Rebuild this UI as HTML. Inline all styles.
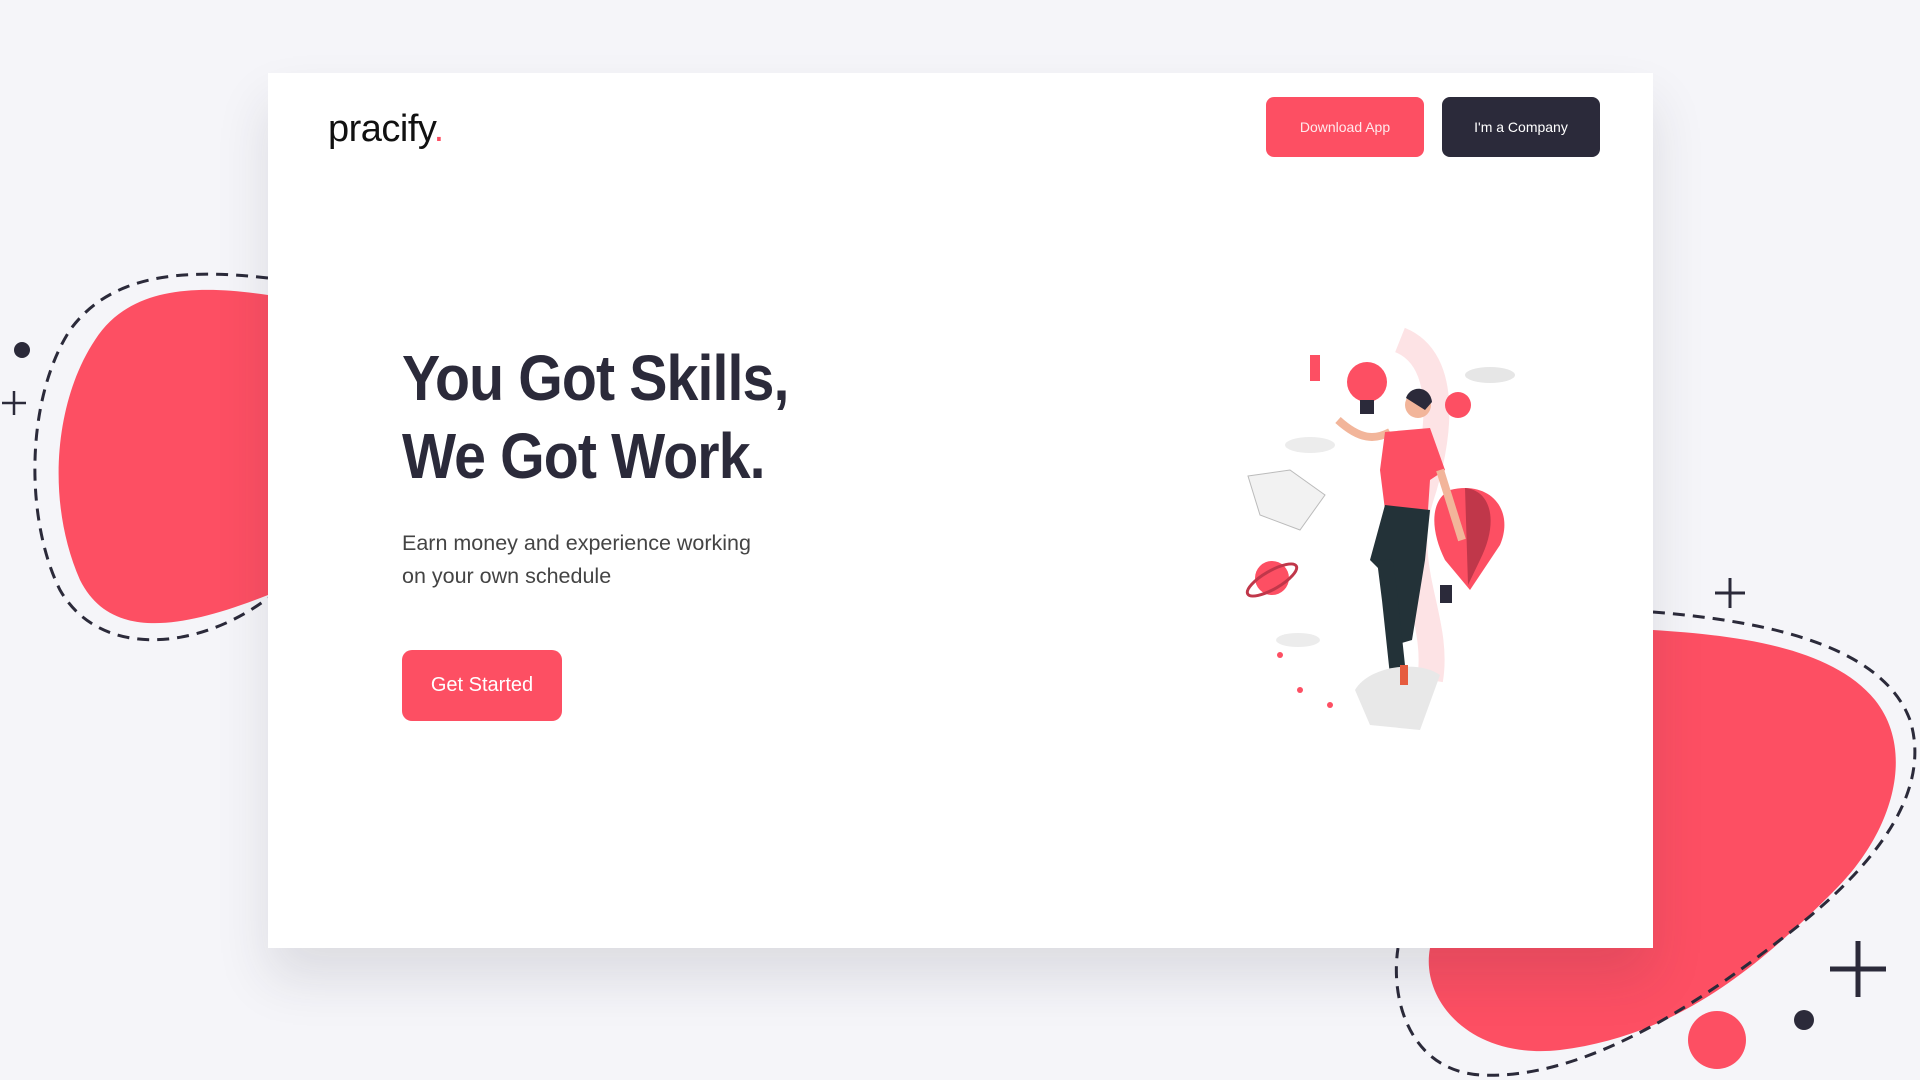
<!DOCTYPE html>
<html><head><meta charset="utf-8"><style>
*{margin:0;padding:0;box-sizing:border-box}
body{width:1920px;height:1080px;background:#f5f5f9;position:relative;overflow:hidden;font-family:"Liberation Sans",sans-serif}
svg.bg{position:absolute;left:0;top:0}
.card{position:absolute;left:268px;top:73px;width:1385px;height:875px;background:#fff;box-shadow:0 30px 50px rgba(40,40,60,.12)}
.logo{position:absolute;left:60px;top:35px;font-size:38px;color:#111;letter-spacing:-0.5px}
.logo span{color:#fd4f63}
.btn{position:absolute;top:24px;height:60px;width:158px;border-radius:8px;color:#fff;font-size:14px;display:flex;align-items:center;justify-content:center}
.b1{left:998px;background:#fd4f63;color:#ffe9ec}
.b2{left:1174px;background:#2b2a3a}
h1{position:absolute;left:134px;top:266px;font-size:64px;line-height:78px;color:#2b2a3a;font-weight:bold;letter-spacing:-1px;transform:scaleX(0.895);transform-origin:left top;white-space:nowrap}
p{position:absolute;left:134px;top:454px;font-size:21.5px;line-height:33px;color:#444}
.gs{position:absolute;left:134px;top:577px;width:160px;height:71px;border-radius:10px;background:#fd4f63;color:#fff;font-size:20px;display:flex;align-items:center;justify-content:center}
svg.ill{position:absolute;left:960px;top:240px}
</style></head><body>
<svg class="bg" width="1920" height="1080">
<path d="M268,295 C200,285 130,285 95,340 C55,400 45,500 80,580 C110,640 180,630 268,595 Z" fill="#fd4f63"/>
<path d="M268,278 C180,268 110,275 70,330 C25,400 25,520 60,590 C100,660 200,650 268,598" fill="none" stroke="#2b2a3a" stroke-width="3" stroke-dasharray="12 8"/>
<circle cx="22" cy="350" r="8" fill="#2b2a3a"/>
<path d="M2,403h24M14,391v24" stroke="#2b2a3a" stroke-width="2.5"/>
<path d="M1653,630 C1730,635 1830,645 1875,700 C1915,750 1895,830 1835,890 C1760,965 1680,1035 1560,1050 C1470,1060 1420,1000 1430,948 L1653,948 Z" fill="#fd4f63"/>
<path d="M1653,612 C1750,620 1880,640 1910,720 C1935,800 1860,880 1780,940 C1690,1010 1580,1080 1480,1075 C1410,1070 1390,1000 1398,948" fill="none" stroke="#2b2a3a" stroke-width="3" stroke-dasharray="12 8"/>
<path d="M1715,593h30M1730,578v30" stroke="#2b2a3a" stroke-width="3"/>
<path d="M1830,969h56M1858,941v56" stroke="#2b2a3a" stroke-width="5"/>
<circle cx="1717" cy="1040" r="29" fill="#fd4f63"/>
<circle cx="1804" cy="1020" r="10" fill="#2b2a3a"/>
</svg>
<div class="card">
<div class="logo">pracify<span>.</span></div>
<div class="btn b1">Download App</div>
<div class="btn b2">I'm a Company</div>
<h1>You Got Skills,<br>We Got Work.</h1>
<p>Earn money and experience working<br>on your own schedule</p>
<div class="gs">Get Started</div>
<svg class="ill" width="340" height="440" viewBox="1228 313 340 440">
<path d="M1400,340 C1450,360 1440,440 1420,500 C1400,570 1440,620 1430,680" fill="none" stroke="#fde3e5" stroke-width="26"/>
<ellipse cx="1490" cy="375" rx="25" ry="8" fill="#e6e6e6"/>
<ellipse cx="1310" cy="445" rx="25" ry="8" fill="#ececec"/>
<ellipse cx="1298" cy="640" rx="22" ry="7" fill="#ececec"/>
<rect x="1310" y="355" width="10" height="26" fill="#fd4f63"/>
<circle cx="1367" cy="382" r="20" fill="#fd4f63"/><rect x="1360" y="400" width="14" height="14" fill="#2b2a3a"/>
<circle cx="1458" cy="405" r="13" fill="#fd4f63"/>
<path d="M1248,476 L1290,470 L1325,495 L1300,530 L1260,515 Z" fill="#f2f2f2" stroke="#bbb"/>
<circle cx="1272" cy="578" r="17" fill="#fd4f63"/><ellipse cx="1272" cy="580" rx="28" ry="9" fill="none" stroke="#c0374a" stroke-width="3" transform="rotate(-30 1272 580)"/>
<path d="M1450,490 C1490,480 1515,510 1500,545 L1470,590 L1445,560 C1430,530 1430,500 1450,490Z" fill="#fd4f63"/>
<path d="M1465,488 C1490,490 1500,520 1480,560 L1468,585 Z" fill="#c0374a"/>
<rect x="1440" y="585" width="12" height="18" fill="#2b2a3a"/>
<path d="M1338,420 C1360,440 1375,440 1390,432" stroke="#f2b59a" stroke-width="8" fill="none"/>
<circle cx="1418" cy="405" r="13" fill="#f2b59a"/><path d="M1406,398 C1410,385 1430,385 1432,402 L1425,410 Z" fill="#2b2a3a"/>
<path d="M1385,432 L1430,428 L1445,470 L1430,480 L1428,510 L1385,510 L1380,470 Z" fill="#fd4f63"/>
<path d="M1440,470 L1462,540" stroke="#f2b59a" stroke-width="8"/>
<path d="M1385,505 L1430,510 L1425,560 L1412,640 L1395,645 L1395,585 L1370,560 Z" fill="#233238"/>
<path d="M1385,560 L1390,600 L1398,675" stroke="#233238" stroke-width="16"/>
<path d="M1355,690 C1370,665 1420,660 1440,675 L1420,730 L1370,725 Z" fill="#e8e8e8"/>
<rect x="1400" y="665" width="8" height="20" fill="#e65c3f"/>
<circle cx="1300" cy="690" r="3" fill="#fd4f63"/><circle cx="1330" cy="705" r="3" fill="#fd4f63"/><circle cx="1280" cy="655" r="3" fill="#fd4f63"/>
</svg>
</div>
</body></html>
